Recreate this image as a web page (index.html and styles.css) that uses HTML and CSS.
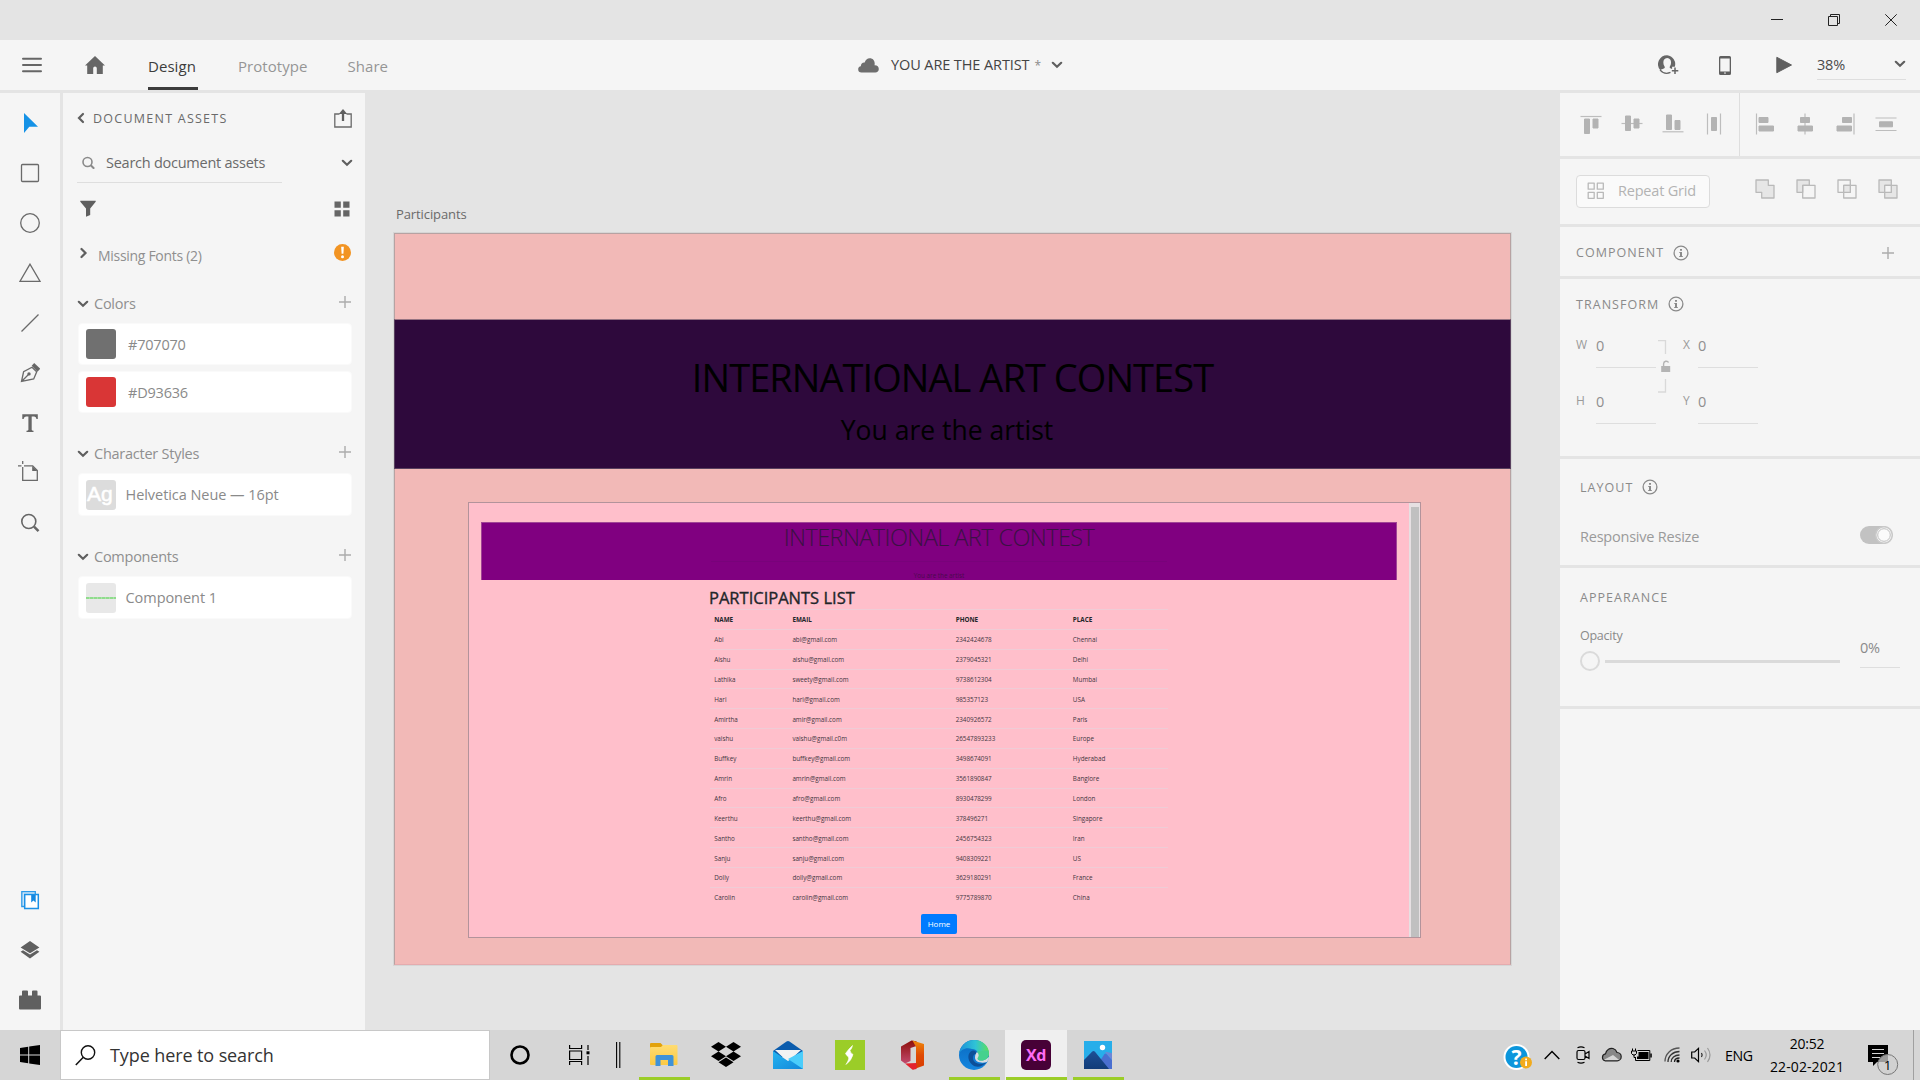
FILE: index.html
```html
<!DOCTYPE html>
<html lang="en">
<head>
<meta charset="utf-8">
<title>YOU ARE THE ARTIST</title>
<link rel="stylesheet" href="styles.css">
</head>
<body>
<svg width="0" height="0" class="defs">
  <defs>
    <symbol id="chev-down" viewBox="0 0 12 8"><path d="M1.800 1.800 6 5.800l4.200-4" fill="none" stroke="currentColor" stroke-width="2.200" stroke-linecap="round"/></symbol>
    <symbol id="plus" viewBox="0 0 12 12"><path d="M6 0v12M0 6h12" fill="none" stroke="currentColor" stroke-width="1.400"/></symbol>
    <symbol id="info" viewBox="0 0 16 16"><circle cx="8" cy="8" r="6.900" fill="none" stroke="currentColor" stroke-width="1.300"/><path d="M7 4h2v1.800H7zM6.300 7H9v4h.8v1H6.200v-1H7V8h-.7z" fill="currentColor"/></symbol>
    <linearGradient id="gEdge" x1="0" y1="0" x2="1" y2="0"><stop offset="0" stop-color="#1c8fd8"/><stop offset=".55" stop-color="#2fc3d6"/><stop offset="1" stop-color="#5fe05a"/></linearGradient>
    <linearGradient id="gEdge2" x1="0" y1="0" x2="0" y2="1"><stop offset="0" stop-color="#0a6ac0"/><stop offset="1" stop-color="#1586df"/></linearGradient>
    <linearGradient id="gOffice" x1="0" y1="0" x2="0" y2="1"><stop offset="0" stop-color="#8d0f0b"/><stop offset="1" stop-color="#c24a6e"/></linearGradient>
    <linearGradient id="gOffice2" x1="0" y1="0" x2="0" y2="1"><stop offset="0" stop-color="#ef8a0c"/><stop offset=".5" stop-color="#e04a04"/><stop offset="1" stop-color="#d83b01"/></linearGradient>
    <linearGradient id="gMail" x1="0" y1="0" x2="1" y2="1"><stop offset="0" stop-color="#25b4f0"/><stop offset="1" stop-color="#1488da"/></linearGradient>
    <linearGradient id="gFolder" x1="0" y1="0" x2="0" y2="1"><stop offset="0" stop-color="#ffdc72"/><stop offset="1" stop-color="#fbc944"/></linearGradient>
    <linearGradient id="gPeak" x1="0" y1="0" x2="0" y2="1"><stop offset="0" stop-color="#1d4f96"/><stop offset="1" stop-color="#123c78"/></linearGradient>
  </defs>
</svg>

<div class="titlebar">
  <svg width="12" height="12"><path d="M0 5.500h12" stroke="#222"/></svg>
  <svg width="12" height="12"><path d="M.5 2.500h9v9h-9zM2.500 2V.5h9v9H10" fill="none" stroke="#222"/></svg>
  <svg width="12" height="12"><path d="M.3.3l11.400 11.400M11.700.3.3 11.700" stroke="#222"/></svg>
</div>

<header class="appbar">
  <div class="left">
    <svg class="burger" width="20" height="16"><path d="M1 1.700h18M1 8h18M1 14.300h18" stroke="#666" stroke-width="2" stroke-linecap="round"/></svg>
    <svg class="home" width="20" height="18"><path d="M10 0 0 9.500h2.200V18h6v-5.800a1.800 1.800 0 0 1 3.600 0V18h6V9.500H20l-3.200-3z" fill="#666"/></svg>
    <nav class="modes"><a class="mode on">Design</a><a class="mode proto">Prototype</a><a class="mode">Share</a></nav>
  </div>
  <div class="doc">
    <svg width="21" height="15"><path d="M3.500 14.500A3.300 3.300 0 0 1 .2 11.200c0-1.700 1-2.700 2.600-3C2.800 6 4.600 4.300 6.700 4.600 7.400 2 9.200.3 11.800.3c3 0 4.800 2.200 4.900 5 0 .8 0 1.400-.2 2 2.600-.2 4.300 1.400 4.300 3.600 0 2.100-1.500 3.600-3.500 3.600z" fill="#6e6e6e"/></svg>
    <span class="docname">YOU ARE THE ARTIST</span><span class="star">*</span>
    <svg width="12" height="8" class="c6"><use href="#chev-down"/></svg>
  </div>
  <div class="right">
    <svg width="21" height="20"><path d="M9.200.2a9 9 0 0 0-7 14.800C3.500 14 6 13.700 6.600 12.900c.4-.6.200-1.300-.3-2C4.700 8.500 4.800 3 9.200 3s4.500 5.500 2.900 7.900c-.6.9-.7 1.900.2 2.300l1.800.8v-2.200h2.700A9 9 0 0 0 9.200.2z" fill="#666"/><path d="M2 14.800a9 9 0 0 0 10.500 2.600" fill="none" stroke="#666" stroke-width="1.200"/><path d="M17 12.500v6.500M13.800 15.700h6.500" stroke="#666" stroke-width="1.500"/></svg>
    <svg class="phone" width="12" height="19"><path fill-rule="evenodd" d="M1.500 0h9A1.500 1.500 0 0 1 12 1.500v16a1.500 1.500 0 0 1-1.500 1.500h-9A1.500 1.500 0 0 1 0 17.500v-16A1.500 1.500 0 0 1 1.500 0zM1.300 2.500v13h9.400v-13zM6 16.300a.8.800 0 1 0 0 1.600.8.800 0 0 0 0-1.600z" fill="#5f5f5f"/></svg>
    <svg class="play" width="16" height="18"><path d="M.8 1.300v15.400L15.500 9z" fill="#5f5f5f" stroke="#5f5f5f" stroke-linejoin="round"/></svg>
    <div class="zoom"><span>38%</span><svg width="12" height="8" class="c6"><use href="#chev-down"/></svg></div>
  </div>
</header>

<main class="work">
  <aside class="rail">
    <div class="tools">
      <i><svg width="20" height="20"><path d="M4 0v20l5.300-6.200H18z" fill="#1592e6"/></svg></i>
      <i><svg width="20" height="20"><rect x="1.500" y="1.500" width="17" height="17" rx="1" class="ln"/></svg></i>
      <i><svg width="20" height="20"><circle cx="10" cy="10" r="9.300" class="ln"/></svg></i>
      <i><svg width="22" height="20"><path d="M11 1.200.9 18.400h20.200z" class="ln"/></svg></i>
      <i><svg width="20" height="20"><path d="M1.500 18.500 18.500 1.500" class="ln"/></svg></i>
      <i><svg width="20" height="20"><path d="M1.500 18.500 3.600 8.800 12 4.200l4.700 4.600-3 7.200zM1.500 18.500l7-7" class="ln"/><circle cx="9" cy="10.900" r="1.700" fill="#666"/><path d="m11.700 2.800 2.500-2.700 6 5.700-2.800 3z" fill="#666"/></svg></i>
      <i><svg width="20" height="20"><path d="M2.300 1.200h15.500v4.900h-1.300q-.3-2.700-2.300-2.700H11.700v13.300q0 1 1.800 1v1.300h-7v-1.300q1.900 0 1.900-1V3.400H6q-2.100 0-2.400 2.700H2.300z" fill="#666"/></svg></i>
      <i class="up"><svg width="22" height="22"><path d="M5.700 7v13.300h14.600V10.500l-4.600-4.600H7M1 5.900h3.500M5.700 1v3" class="ln"/><path d="M15.200 6v5h5.200z" fill="#666"/></svg></i>
      <i><svg width="20" height="20"><circle cx="8.800" cy="8.500" r="7" fill="none" stroke="#666" stroke-width="1.600"/><path d="m14 13.700 4.500 4.500" stroke="#666" stroke-width="2.400"/></svg></i>
    </div>
    <div class="tools">
      <i><svg width="20" height="20"><path d="M4 16.500H1.800V1.700h13.500V4" fill="#cfe6f8" stroke="#2c9ae8" stroke-width="1.300"/><path d="M4.700 4.500h13.600v14H4.700z" fill="#fff" stroke="#1b91e6" stroke-width="1.500"/><path d="M11.200 5h4.500v7.500l-2.300-2-2.200 2z" fill="#1488e0"/></svg></i>
      <i><svg width="20" height="20"><path d="M10 1 .6 7.500 10 13.300l9.400-5.800zM.6 11.800l2.400-1.600 7 4.300 7-4.300 2.400 1.600L10 18.500z" fill="#5f5f5f"/></svg></i>
      <i><svg width="22" height="20"><path d="M0 6.500a1 1 0 0 1 1-1h2V1.600Q3 .6 4 .6h4q1 0 1 1v3.900h4V1.600q0-1 1-1h3.500q1 0 1 1v3.900H21a1 1 0 0 1 1 1v12a1 1 0 0 1-1 1H1a1 1 0 0 1-1-1z" fill="#606060"/></svg></i>
    </div>
  </aside>

  <aside class="assets">
    <div class="row head"><svg width="8" height="12"><path d="M6 2 2 6l4 4" class="arrow"/></svg><span class="caps dark">DOCUMENT ASSETS</span><svg class="end" width="18" height="19"><path d="M5.500 5H.8v13h16.400V5h-4.700" class="ln"/><path d="M9 12V3" stroke="#5f5f5f" stroke-width="2.300"/><path d="M9 0 4.800 5h8.400z" fill="#5f5f5f"/></svg></div>
    <div class="row search"><div class="field"><svg width="13" height="13"><circle cx="5.500" cy="6" r="4.500" fill="none" stroke="#8a8a8a" stroke-width="1.600"/><path d="m8.800 9.300 3.400 3.400" stroke="#8a8a8a" stroke-width="2"/></svg><span>Search document assets</span></div><svg class="end c6" width="12" height="8"><use href="#chev-down"/></svg></div>
    <div class="row filter"><svg width="16" height="17"><path d="M.3.8h15.400v1L10.200 8.600v6.300L6 16.700V8.600L.3 1.800z" fill="#5f5f5f"/></svg><svg class="end" width="16" height="16"><path d="M.5.500h6.300v6.300H.5zM9.200.5h6.300v6.300H9.200zM.5 9.200h6.300v6.300H.5zM9.200 9.200h6.300v6.300H9.200z" fill="#666"/></svg></div>
    <div class="row missing"><svg width="8" height="12"><path d="M1.500 2 5.500 6l-4 4" class="arrow"/></svg><span>Missing Fonts (2)</span><svg class="end" width="17" height="17"><circle cx="8.500" cy="8.500" r="8.500" fill="#f29423"/><path d="M7.200 2.800h2.600l-.4 7H7.600z" fill="#fff"/><circle cx="8.500" cy="12.700" r="1.500" fill="#fff"/></svg></div>

    <div class="row group first"><svg class="c6" width="12" height="8"><use href="#chev-down"/></svg><span>Colors</span><svg class="end cb" width="12" height="12"><use href="#plus"/></svg></div>
    <div class="card short"><b class="sw grey"></b><span class="hex">#707070</span></div>
    <div class="card short gap"><b class="sw red"></b><span class="hex">#D93636</span></div>
    <div class="row group"><svg class="c6" width="12" height="8"><use href="#chev-down"/></svg><span>Character Styles</span><svg class="end cb" width="12" height="12"><use href="#plus"/></svg></div>
    <div class="card"><b class="sw ag">Ag</b><span>Helvetica Neue — 16pt</span></div>
    <div class="row group"><svg class="c6" width="12" height="8"><use href="#chev-down"/></svg><span>Components</span><svg class="end cb" width="12" height="12"><use href="#plus"/></svg></div>
    <div class="card"><b class="sw comp"></b><span>Component 1</span></div>
  </aside>

  <section class="canvas">
    <div class="ablabel">Participants</div>
    <div class="artboard">
      <div class="banner"><h1>INTERNATIONAL ART CONTEST</h1><h2>You are the artist</h2></div>
      <div class="shot">
        <div class="page">
          <div class="purple"><h3>INTERNATIONAL ART CONTEST</h3><hr><p>You are the artist</p></div>
          <div class="list">
            <h4>PARTICIPANTS LIST</h4>
            <div class="tr th"><span>NAME</span><span>EMAIL</span><span>PHONE</span><span>PLACE</span></div>
            <div class="tr"><span>Abi</span><span>abi@gmail.com</span><span>2342424678</span><span>Chennai</span></div>
            <div class="tr"><span>Aishu</span><span>aishu@gmail.com</span><span>2379045321</span><span>Delhi</span></div>
            <div class="tr"><span>Lathika</span><span>sweety@gmail.com</span><span>9738612304</span><span>Mumbai</span></div>
            <div class="tr"><span>Hari</span><span>hari@gmail.com</span><span>985357123</span><span>USA</span></div>
            <div class="tr"><span>Amirtha</span><span>amir@gmail.com</span><span>2340926572</span><span>Paris</span></div>
            <div class="tr"><span>vaishu</span><span>vaishu@gmail.c0m</span><span>26547893233</span><span>Europe</span></div>
            <div class="tr"><span>Buffkey</span><span>buffkey@gmail.com</span><span>3498674091</span><span>Hyderabad</span></div>
            <div class="tr"><span>Amrin</span><span>amrin@gmail.com</span><span>3561890847</span><span>Banglore</span></div>
            <div class="tr"><span>Afro</span><span>afro@gmail.com</span><span>8930478299</span><span>London</span></div>
            <div class="tr"><span>Keerthu</span><span>keerthu@gmail.com</span><span>378496271</span><span>Singapore</span></div>
            <div class="tr"><span>Santho</span><span>santho@gmail.com</span><span>2456754323</span><span>Iran</span></div>
            <div class="tr"><span>Sanju</span><span>sanju@gmail.com</span><span>9408309221</span><span>US</span></div>
            <div class="tr"><span>Dolly</span><span>dolly@gmail.com</span><span>3629180291</span><span>France</span></div>
            <div class="tr"><span>Carolin</span><span>carolin@gmail.com</span><span>9775789870</span><span>China</span></div>
            <div class="homebtn">Home</div>
          </div>
        </div>
        <div class="scroll"></div>
      </div>
    </div>
  </section>

  <aside class="props">
    <div class="sec align">
      <div class="ag1">
        <svg width="24" height="24"><path d="M1.500 4.500h21" class="al"/><path d="M5.500 7h5v14.500h-5zM14 7h5v9h-5z" class="af"/></svg>
        <svg width="24" height="24"><path d="M1.500 11.500h21" class="al"/><path d="M5.500 4h5v14.500h-5zM14 7h5v9h-5z" class="af"/></svg>
        <svg width="24" height="24"><path d="M1.500 19.800h21" class="al"/><path d="M5.500 3h5v14.500h-5zM14 8.500h5v9h-5z" class="af"/></svg>
        <svg width="24" height="24"><path d="M5.500 1.500v21M18.500 1.500v21" class="al"/><path d="M9.500 5.500h5v13h-5z" class="af"/></svg>
      </div>
      <div class="ag2">
        <svg width="24" height="24"><path d="M3.500 1.500v21" class="al"/><path d="M6 5.500h9v5H6zM6 14h14.500v5H6z" class="af"/></svg>
        <svg width="24" height="24"><path d="M12 1.500v21" class="al"/><path d="M7.500 5.500h9v5h-9zM5 14h14.500v5H5z" class="af"/></svg>
        <svg width="24" height="24"><path d="M20 1.500v21" class="al"/><path d="M8.500 5.500h9v5h-9zM3 14h14.500v5H3z" class="af"/></svg>
        <svg width="24" height="24"><path d="M1.500 6h21M1.500 18.500h21" class="al"/><path d="M5.500 9.800h13v5h-13z" class="af"/></svg>
      </div>
    </div>
    <div class="sec repeat">
      <div class="rbtn"><svg width="18" height="18"><path d="M1.200 1.200h6v6h-6zM10.300 1.200h6v6h-6zM1.200 10.300h6v6h-6zM10.300 10.300h6v6h-6z" class="bl"/></svg><span>Repeat Grid</span></div>
      <div class="bools">
        <svg width="20" height="20"><path d="M1 1h12.300v5.300H19V19H6.700v-5.700H1z" class="bl fill"/></svg>
        <svg width="20" height="20"><path d="M1 1h12.300v5.300H6.700v7H1z" class="bl fill"/><path d="M6.700 6.300H19V19H6.700z" class="bl"/></svg>
        <svg width="20" height="20"><path d="M1 1h12.300v12.300H1zM6.700 6.300H19V19H6.700z" class="bl"/><path d="M6.700 6.300h6.600v7H6.700z" class="bl fill"/></svg>
        <svg width="20" height="20"><path d="M1 1h12.300v12.300H1zM6.700 6.300H19V19H6.700z" class="bl fill"/><path d="M6.700 6.300h6.600v7H6.700z" class="bl white"/></svg>
      </div>
    </div>
    <div class="sec component"><span class="caps">COMPONENT</span><svg class="inf" width="16" height="16"><use href="#info"/></svg><svg class="end cb" width="12" height="12"><use href="#plus"/></svg></div>
    <div class="sec transform">
      <div class="sh"><span class="caps">TRANSFORM</span><svg class="inf" width="16" height="16"><use href="#info"/></svg></div>
      <div class="fields">
        <div class="col"><label>W<em>0</em></label><label>H<em>0</em></label></div>
        <svg class="lock" width="14" height="54"><path d="M0 .7h7.500V14M7.500 39v13H0" fill="none" stroke="#d9d9d9" stroke-width="1.300"/><path d="M5.600 27v-3.200a2.700 2.700 0 0 1 5 -1.300" fill="none" stroke="#b4b4b4" stroke-width="1.400"/><path d="M3.200 26h9v6h-9z" fill="#b4b4b4"/></svg>
        <div class="col two"><label>X<em>0</em></label><label>Y<em>0</em></label></div>
      </div>
    </div>
    <div class="sec layout">
      <div class="sh"><span class="caps">LAYOUT</span><svg class="inf" width="16" height="16"><use href="#info"/></svg></div>
      <div class="resp"><span>Responsive Resize</span><svg class="end" width="33" height="18"><rect width="32" height="18" rx="9" fill="#c2c2c2"/><circle cx="24" cy="9" r="8.300" fill="#f8f8f8" stroke="#c9c9c9" stroke-width="1.500"/><circle cx="24" cy="9" r="6.300" fill="#fbfbfb" stroke="#c0c0c0" stroke-width="1"/></svg></div>
    </div>
    <div class="sec appearance">
      <div class="sh"><span class="caps">APPEARANCE</span></div>
      <div class="opac"><div class="sl"><span>Opacity</span><div class="track"><i></i><u></u></div></div><div class="pct">0%</div></div>
    </div>
    <div class="sec rest"></div>
  </aside>
</main>

<footer class="taskbar">
  <div class="start"><svg width="20" height="20"><path d="M0 3 8.200 1.700v7.800H0zM9.200 1.500 20 0v9.500H9.200zM0 10.500h8.200v7.800L0 17zM9.200 10.500H20V20L9.200 18.500z"/></svg></div>
  <div class="tsearch"><svg width="21" height="21"><circle cx="13" cy="7.500" r="6.700" fill="none" stroke="#111" stroke-width="1.400"/><path d="M8.300 12.300.8 20" stroke="#111" stroke-width="1.500"/></svg><span>Type here to search</span></div>
  <div class="sys">
    <svg width="20" height="20"><circle cx="10" cy="10" r="8.500" fill="none" stroke="#000" stroke-width="2.600"/></svg>
    <svg class="tv" width="21" height="20"><path d="M.6 0v3.500h12V0M.6 6h12v8.500h-12zM.6 20v-3.500h12V20M19 0v5M19 11v9" fill="none" stroke="#000" stroke-width="1.200"/><path d="M17.500 6.300h3v3h-3z"/></svg>
    <svg class="bars" width="5" height="26"><path d="M.6 0v26M3.800 0v26" stroke="#000" stroke-width="1.100"/></svg>
  </div>
  <div class="apps">
    <i class="run"><svg width="30" height="30"><path d="M1 4q0-1 1-1h9.500l2.500 2.500V9H1z" fill="#e2a20c"/><path d="M1 8q0-1 1-1h10l2-2h13.500q1 0 1 1v18q0 1-1 1H2q-1 0-1-1z" fill="url(#gFolder)"/><path d="M6.500 26V16.500q0-1.500 1.500-1.500h15q1.500 0 1.500 1.500V26H19v-6h-7.500v6z" fill="#3f92d8"/></svg></i>
    <i><svg width="30" height="30"><path d="m7.500 2 7.500 4.800-7.500 4.700L0 6.800zM22.500 2 30 6.800l-7.500 4.700L15 6.800zM0 16.300l7.500-4.800 7.500 4.800L7.500 21zM22.500 11.500l7.500 4.800-7.500 4.700-7.500-4.700zM7.500 22.300l7.500-4.700 7.500 4.700L15 27z"/></svg></i>
    <i><svg width="30" height="30"><path d="M0 11 13.500 1.600q1.500-1 3 0L30 11v6H0z" fill="#0b5cad"/><path d="M2 10h26L15 22z" fill="#f3f3f3"/><path d="M0 11l15 10 15-10v18H0z" fill="url(#gMail)"/><path d="M30 11 15 19l15 10z" fill="#4bcdfb"/></svg></i>
    <i><svg width="30" height="30"><path d="M0 0h30v30H0z" fill="#9bcd28"/><path d="M17.500 5.500q-.5 3-2.500 5 0 2 3 4-1.500 6-7 10 3.500-5.500 2.500-7.500-2-1.500-3-3.500 3.500-5 7-8z" fill="#fff" stroke="#fff" stroke-width=".6"/></svg></i>
    <i><svg width="30" height="30"><path d="M4 6.500 14.500.5l5 .8V6l-6 2v13L8 23.500l-4-3z" fill="url(#gOffice)"/><path d="M15.500.5 27 4v21.500L16 29.500l3-6V7z" fill="url(#gOffice2)"/><path d="m8 23.500 11.500-.5V29l-4 .7z" fill="#e3222e"/></svg></i>
    <i class="run"><svg width="30" height="30"><circle cx="15" cy="15" r="15" fill="url(#gEdge2)"/><path d="M0 14C1 6 7.500 0 15 0c9 0 15 6.500 15 13 0 5-4 7.500-7.500 7.500-3 0-4.500-1.200-4-2.500 2.500-4-.5-9-5.500-9C7 7 2 9.500 0 14z" fill="url(#gEdge)"/><path d="M14 10.500C8 12 8 20 13 24.500c4 3.500 10 3 15-2.500-4 3-14 2.500-14-4 0-3 1.500-4.500 4-4-1-2.500-2-3.500-4-3.500z" fill="#0d4f98"/><path d="M18 12c3 2.500 2 5 .8 6.500-.7 2.500 5.200 2.800 8.200.5l3-2c0 2-1 3.500-2 5-5 1.500-12 .5-12-4.500 0-3 1-4 2-5.500z" fill="#d8dde0"/><path d="M18 11.500C20.500 14 20 16.500 18.500 18c-.5 3 6 3.500 9.500.5 2-2 2-5 1-8z" fill="#45d18e"/></svg></i>
    <i class="run act"><b class="xd">Xd</b></i>
    <i class="run"><svg width="30" height="30"><path d="M1 1h28v28H1z" fill="#27aeea"/><path d="M15 24 21.500 14q1-1 2 0L29 20v9H14z" fill="#4a6fd0"/><path d="m19 16 2.500-2.500q1-1 2 0L29 20v-7l-6-1z" fill="#6d87d8"/><path d="M1 20 9 11.700q1.500-1.500 3 0L26 29H1z" fill="url(#gPeak)"/><circle cx="19.500" cy="7.500" r="2.700" fill="#fff"/></svg></i>
  </div>
  <div class="tray">
    <svg class="help" width="30" height="28"><circle cx="13.500" cy="14" r="13" fill="#fff"/><circle cx="13.500" cy="14" r="11" fill="#0c96dc"/><text x="13.500" y="21.500" text-anchor="middle" class="q">?</text><circle cx="23" cy="19.500" r="6" fill="#f2ab1d"/><path d="M22.200 15.500h1.800v1.700h-1.800zM22.200 18.200h1.800v4.800h-1.800z" fill="#fff"/></svg>
    <svg class="up1" width="16" height="10"><path d="M.7 9 8 1.500 15.300 9" fill="none" stroke="#000" stroke-width="1.400"/></svg>
    <svg class="cam" width="16" height="18"><path d="M3.500 4.500h5q1.500 0 1.500 1.500v6q0 1.500-1.500 1.500h-5Q2 13.500 2 12V6q0-1.500 1.500-1.500zM10 8l4-2.500v7L10 10M2.500 1.700q3.500-1.700 7 0M2.500 16.300q3.500 1.700 7 0" fill="none" stroke="#000" stroke-width="1.200"/></svg>
    <svg class="cld" width="21" height="15"><path d="M4 13.800a3.600 3.600 0 0 1 .5-7C5.500 2.500 9 .7 12 1.500c2 .6 3.300 2 4 4 2.500.2 4.200 2 4.200 4.200 0 2.500-2 4.100-4 4.100z" fill="#888"/><path d="M2.500 13 12 8l6.500 5.300-2.300.5H4z" fill="#d6d6d6"/><path d="M4 13.800a3.600 3.600 0 0 1 .5-7C5.500 2.500 9 .7 12 1.500c2 .6 3.300 2 4 4 2.500.2 4.200 2 4.200 4.200 0 2.500-2 4.100-4 4.100z" fill="none" stroke="#222" stroke-width="1.200"/></svg>
    <svg class="bat" width="21" height="14"><path d="M6.500 2.500h12.300v10H4.500V10" fill="none" stroke="#000"/><path d="M7.500 4h10v7H6V8.500h1.500zM19.300 5.500h1.500v4h-1.500z"/><path d="M1.500.5V3M4.500.5V3M3 6.500v3h2" fill="none" stroke="#000"/><path d="M.5 3h5v2.500L4 7H2L.5 5.500z" fill="none" stroke="#000"/></svg>
    <svg class="wifi" width="17" height="16"><path d="M1 14.500C1 7 7 1 15.500 1" fill="none" stroke="#555" stroke-width="1.300"/><path d="M4 15C4 9 9 4.500 15.500 4.500M7.200 15C7.200 11 10.500 8 15.500 8" fill="none" stroke="#333" stroke-width="1.300"/><path d="M10.500 15c0-2.500 2-4 5-4" fill="none" stroke="#222" stroke-width="1.300"/><circle cx="14" cy="14" r="1.600"/></svg>
    <svg class="spk" width="21" height="18"><path d="M.7 6h3L7.500 2.300v13.400L3.700 12h-3z" fill="none" stroke="#000" stroke-width="1.200"/><path d="M10.500 7q1.300 2 0 4" fill="none" stroke="#222" stroke-width="1.200"/><path d="M13.500 4.500q3.500 4.500 0 9M16.500 2q5 7 0 14" fill="none" stroke="#999" stroke-width="1.200"/></svg>
    <span class="eng">ENG</span>
    <div class="clock"><span>20:52</span><span class="date">22-02-2021</span></div>
    <svg class="note" width="32" height="30"><path d="M0 0h20v17H9l-4 4v-4H0z"/><path d="M4 4.500h12M4 8.500h12M4 12.500h8" stroke="#d6d6d6" stroke-width="1.200"/><circle cx="19.700" cy="19.500" r="10" fill="#cfcfcf" fill-opacity=".75" stroke="#777"/><text x="19.700" y="24.800" text-anchor="middle" class="n1">1</text></svg>
    <div class="peek"></div>
  </div>
</footer>
</body>
</html>
```
FILE: styles.css
```css
* { box-sizing: border-box; }
body { margin: 0; width: 1920px; height: 1080px; overflow: hidden; display: flex; flex-direction: column; background: #e4e4e4; font: 14px "Open Sans", "Noto Sans", sans-serif; color: #6e6e6e; }
svg { display: block; flex: none; }
.defs { position: absolute; }
span, a { white-space: nowrap; }
i, em { font-style: normal; }
.end { margin-left: auto; }
.c6 { color: #5f5f5f; }
.cb { color: #acacac; }
.ln { fill: none; stroke: #6a6a6a; stroke-width: 1.3; }
.arrow { fill: none; stroke: #5f5f5f; stroke-width: 2.2; stroke-linecap: round; }
.caps { font-size: 12.5px; letter-spacing: 1.05px; color: #8a8a8a; }
.caps.dark { color: #6a6a6a; letter-spacing: 1.25px; }

.titlebar { height: 40px; flex: none; display: flex; justify-content: flex-end; align-items: center; gap: 45px; padding-right: 23px; }

.appbar { height: 50px; flex: none; background: #f5f5f5; display: flex; justify-content: space-between; margin-bottom: 3px; }
.left, .right, .doc { display: flex; align-items: center; }
.left { width: 858px; padding-left: 22px; }
.home { margin-left: 43px; }
.modes { display: flex; gap: 40px; margin-left: 43px; height: 50px; }
.mode { line-height: 53px; font-size: 15px; color: #959595; letter-spacing: .05px; }
.mode.on { width: 50px; color: #3c3c3c; border-bottom: 3px solid #3c3c3c; height: 50px; }
.doc { flex: 1; color: #444; font-size: 14.5px; }
.docname { margin: 0 0 2px 12px; letter-spacing: -.1px; }
.star { margin: 0 10px 0 5px; color: #8a8a8a; font-size: 12px; }
.right { width: 262px; }
.phone { margin-left: 40px; }
.play { margin-left: 45px; }
.zoom { width: 89px; height: 28px; margin: 2px 0 0 25px; padding-bottom: 3px; display: flex; align-items: center; justify-content: space-between; border-bottom: 1px solid #dedede; color: #4b4b4b; font-size: 14.5px; letter-spacing: -.2px; }

.work { flex: 1; min-height: 0; display: flex; }
.rail { width: 60px; background: #f5f5f5; margin-right: 3px; display: flex; flex-direction: column; justify-content: space-between; padding: 5px 0; }
.tools i { height: 50px; display: flex; align-items: center; justify-content: center; }
.tools .up { padding: 0 5px 4px 0; }

.assets { width: 302px; background: #f5f5f5; padding: 0 13px 0 15px; }
.row { display: flex; align-items: center; }
.head { height: 50px; }
.head svg:first-child { margin-left: -1px; }
.head .caps { margin-left: 8px; }
.search { height: 40px; }
.search .end { margin-right: -1px; }
.field { width: 205px; height: 40px; margin-left: -1px; padding-left: 5px; border-bottom: 1px solid #dedede; display: flex; align-items: center; gap: 11px; color: #6a6a6a; font-size: 14.5px; letter-spacing: -.25px; }
.filter { height: 51px; padding: 0 2px 0 2px; }
.missing { height: 38px; padding: 0 1px 2px 2px; color: #8f8f8f; font-size: 14px; }
.missing span { margin: 6px 0 0 10px; letter-spacing: -.3px; }
.missing svg:first-child { margin-top: 2px; }
.group { height: 60px; padding: 21px 1px 0 0; color: #8f8f8f; font-size: 14.5px; letter-spacing: -.25px; }
.group svg:first-child { margin-left: -1px; }
.group span { margin-left: 5px; }
.group .end { margin-top: -4px; }
.group.first { height: 51px; padding-top: 12px; }
.card { height: 43px; background: #fff; border: 1px solid #fafafa; border-radius: 4px; padding-left: 7px; display: flex; align-items: center; gap: 9.5px; color: #8a8a8a; font-size: 14.5px; letter-spacing: -.05px; }
.card.short { height: 42px; letter-spacing: -.2px; }
.card.gap { margin-top: 6px; }
.hex { margin-left: 2.5px; }
.sw { width: 30px; height: 30px; border-radius: 3px; flex: none; }
.grey { background: #707070; }
.red { background: #d93636; }
.ag { background: #dcdcdc; color: #fff; font: 21px/27px "Liberation Sans", sans-serif; -webkit-text-stroke: .5px #fff; padding-left: 1px; letter-spacing: 0; }
.comp { background: repeating-linear-gradient(90deg, #8fdc8c 0 3px, #a9e2a7 3px 4px) 0 14px / 30px 2px no-repeat, #e8e8e8; }

.canvas { width: 1195px; padding: 113px 0 0 29px; }
.ablabel { height: 27px; line-height: 17px; padding-left: 2px; font-size: 13px; letter-spacing: -.1px; color: #6a6a6a; }
.artboard { width: 1117px; height: 732px; background: #f2b9b7; border: 1px solid #b7a2a2; border-bottom-color: #e5abae; box-shadow: 0 0 0 1px #d6d6d6; }
.banner { margin: 85px -1px 0; height: 150px; background: #2e093c; border: 1px solid #59415f; border-top-color: #967482; text-align: center; color: #000; }
h1, h2, h3, h4 { margin: 0; font-weight: 400; white-space: nowrap; }
h1 { font-size: 38px; line-height: 50px; padding-top: 32px; letter-spacing: -.95px; }
h2 { font-size: 26.5px; line-height: 36px; padding: 10px 11px 0 0; letter-spacing: 0; }
.shot { width: 953px; height: 436px; margin: 33px 0 0 73px; border: 1px solid #b3939b; background: #ffbfcb; display: flex; }
.page { width: 940px; padding: 19px 12px 0 12px; }
.purple { height: 58px; border: 1px solid #a04595; border-bottom: 0; background: #800080; text-align: center; color: #4a0a4e; }
h3 { font-size: 23.5px; line-height: 29px; font-weight: 300; color: #3a1243; letter-spacing: -.58px; }
hr { margin: 9px auto 0; width: 456px; border: 0; border-top: 1px solid #78027a; }
.purple p { margin: 9px 0 0; font-size: 6.3px; line-height: 10px; }
.list { width: 458px; margin: 0 0 0 229px; color: #212529; font-size: 6.3px; }
h4 { height: 29px; line-height: 35px; font-size: 16.5px; -webkit-text-stroke: .35px #212529; margin-left: -1px; }
.tr { height: 19.85px; border-top: 1px solid #efccd6; display: grid; grid-template-columns: 78.2px 163.3px 117.2px 1fr; align-items: center; padding-left: 4.2px; color: #43363f; }
.tr span { padding-top: 1px; }
.th { font-weight: 700; color: #212529; }
.homebtn { width: 36px; height: 20px; margin: 7px auto 0; border-radius: 2px; background: #007bff; color: #fff; font-size: 8px; line-height: 20px; text-align: center; }
.scroll { width: 11px; border: solid #e6e0e2; border-width: 4px 1px 0 2px; background: #c0c0c0; }

.props { width: 360px; display: flex; flex-direction: column; gap: 3px; color: #9a9a9a; }
.sec { background: #f5f5f5; flex: none; }
.align { height: 63px; display: flex; }
.ag1, .ag2 { display: flex; align-items: center; gap: 17px; padding-bottom: 1px; }
.ag1 { width: 180px; padding-left: 19px; border-right: 1px solid #dedede; }
.ag2 { padding-left: 12.5px; gap: 16.6px; }
.al { stroke: #bdbdbd; stroke-width: 1.2; }
.af { fill: #b3b3b3; stroke: #b3b3b3; stroke-linejoin: round; }
.repeat { height: 65px; padding: 0 22px 1px 16px; display: flex; align-items: center; justify-content: space-between; }
.rbtn { width: 134px; height: 33px; border: 1px solid #dcdcdc; border-radius: 4px; background: #fafafa; display: flex; align-items: center; padding: 0 0 1px 10px; color: #b3b3b3; font-size: 14.5px; letter-spacing: -.2px; }
.rbtn span { margin-left: 13px; }
.bools { display: flex; gap: 21px; padding-bottom: 4px; }
.bl { fill: none; stroke: #b9b9b9; stroke-width: 1.3; stroke-linejoin: round; }
.bl.fill { fill: #e6e6e6; }
.bl.white { fill: #f5f5f5; }
.component { height: 49px; display: flex; align-items: center; padding: 2px 26px 0 16px; }
.inf { margin-left: 9px; color: #8a8a8a; }
.sh { display: flex; align-items: center; height: 52px; }
.transform { height: 177px; padding-left: 16px; }
.transform .sh { height: 50px; margin-bottom: 2px; }
.fields { display: flex; padding-top: 1px; }
.col label { display: flex; justify-content: space-between; width: 80px; height: 56px; line-height: 26px; font-size: 12px; }
.col em { width: 60px; height: 36px; line-height: 28px; border-bottom: 1px solid #dedede; font-size: 14.5px; color: #8f8f8f; }
.lock { margin: 8px 0 0 2px; }
.two { margin-left: 11px; }
.two label { width: 75px; }
.layout { height: 106px; padding: 2px 0 0 20px; }
.resp { display: flex; align-items: center; height: 44px; padding-right: 27px; font-size: 14.5px; letter-spacing: -.22px; }
.resp span { margin-top: 2px; }
.appearance { height: 138px; padding: 3px 0 0 20px; }
.opac { display: flex; color: #8a8a8a; }
.sl { width: 280px; font-size: 12.5px; line-height: 18px; letter-spacing: -.25px; padding-top: 4px; }
.track { display: flex; align-items: center; gap: 5px; margin-top: 6px; }
.track i { width: 20px; height: 20px; border: 2px solid #dadada; border-radius: 50%; }
.track u { width: 235px; height: 3px; background: #dadada; }
.pct { width: 40px; height: 45px; border-bottom: 1px solid #dedede; padding-top: 15px; line-height: 20px; font-size: 14.5px; letter-spacing: -.3px; }
.rest { flex: 1; }

.taskbar { height: 50px; flex: none; background: #d6d6d6; display: flex; align-items: center; color: #000; }
.start { width: 60px; padding-left: 20px; }
.tsearch { width: 430px; height: 50px; background: #fff; border: 1px solid #c8c8c8; display: flex; align-items: center; padding-left: 14px; color: #333; font-size: 18px; letter-spacing: -.1px; }
.tsearch span { margin-left: 14px; }
.sys { display: flex; align-items: center; padding-left: 20px; width: 143px; }
.tv { margin-left: 39px; }
.bars { margin-left: 26px; }
.apps { display: flex; height: 50px; }
.apps i { width: 62px; height: 50px; display: flex; justify-content: center; align-items: center; }
.apps .run { background: linear-gradient(#9bcd28, #9bcd28) center bottom / 51px 3px no-repeat; }
.apps .act { background: linear-gradient(#9bcd28, #9bcd28) center bottom / 61px 3px no-repeat, #efefef; }
.xd { width: 30px; height: 30px; border-radius: 5px; background: #470137; color: #ff6cf5; font: 700 16px/30px "Open Sans", sans-serif; text-align: center; letter-spacing: -.5px; }
.tray { display: flex; align-items: center; margin-left: 374px; height: 50px; }
.help { margin: 3px 0 0; }
.q { font: 700 21px "Open Sans", sans-serif; fill: #fff; }
.up1 { margin-left: 11px; }
.cam { margin-left: 15px; }
.cld { margin-left: 10px; margin-top: -2px; }
.bat { margin-left: 9px; }
.wifi { margin-left: 12px; }
.spk { margin-left: 10px; }
.eng { margin-left: 13px; width: 28px; font-size: 14.2px; letter-spacing: -.4px; }
.clock { width: 78px; margin-left: 15px; display: flex; flex-direction: column; align-items: center; font-size: 14px; line-height: 23px; padding-bottom: 1px; letter-spacing: -.2px; }
.date { letter-spacing: .1px; }
.note { margin: 10px 0 0 22px; }
.n1 { font: 13.5px "Open Sans", sans-serif; }
.peek { width: 1px; height: 50px; background: #a0a0a0; margin-left: 13px; }
```
